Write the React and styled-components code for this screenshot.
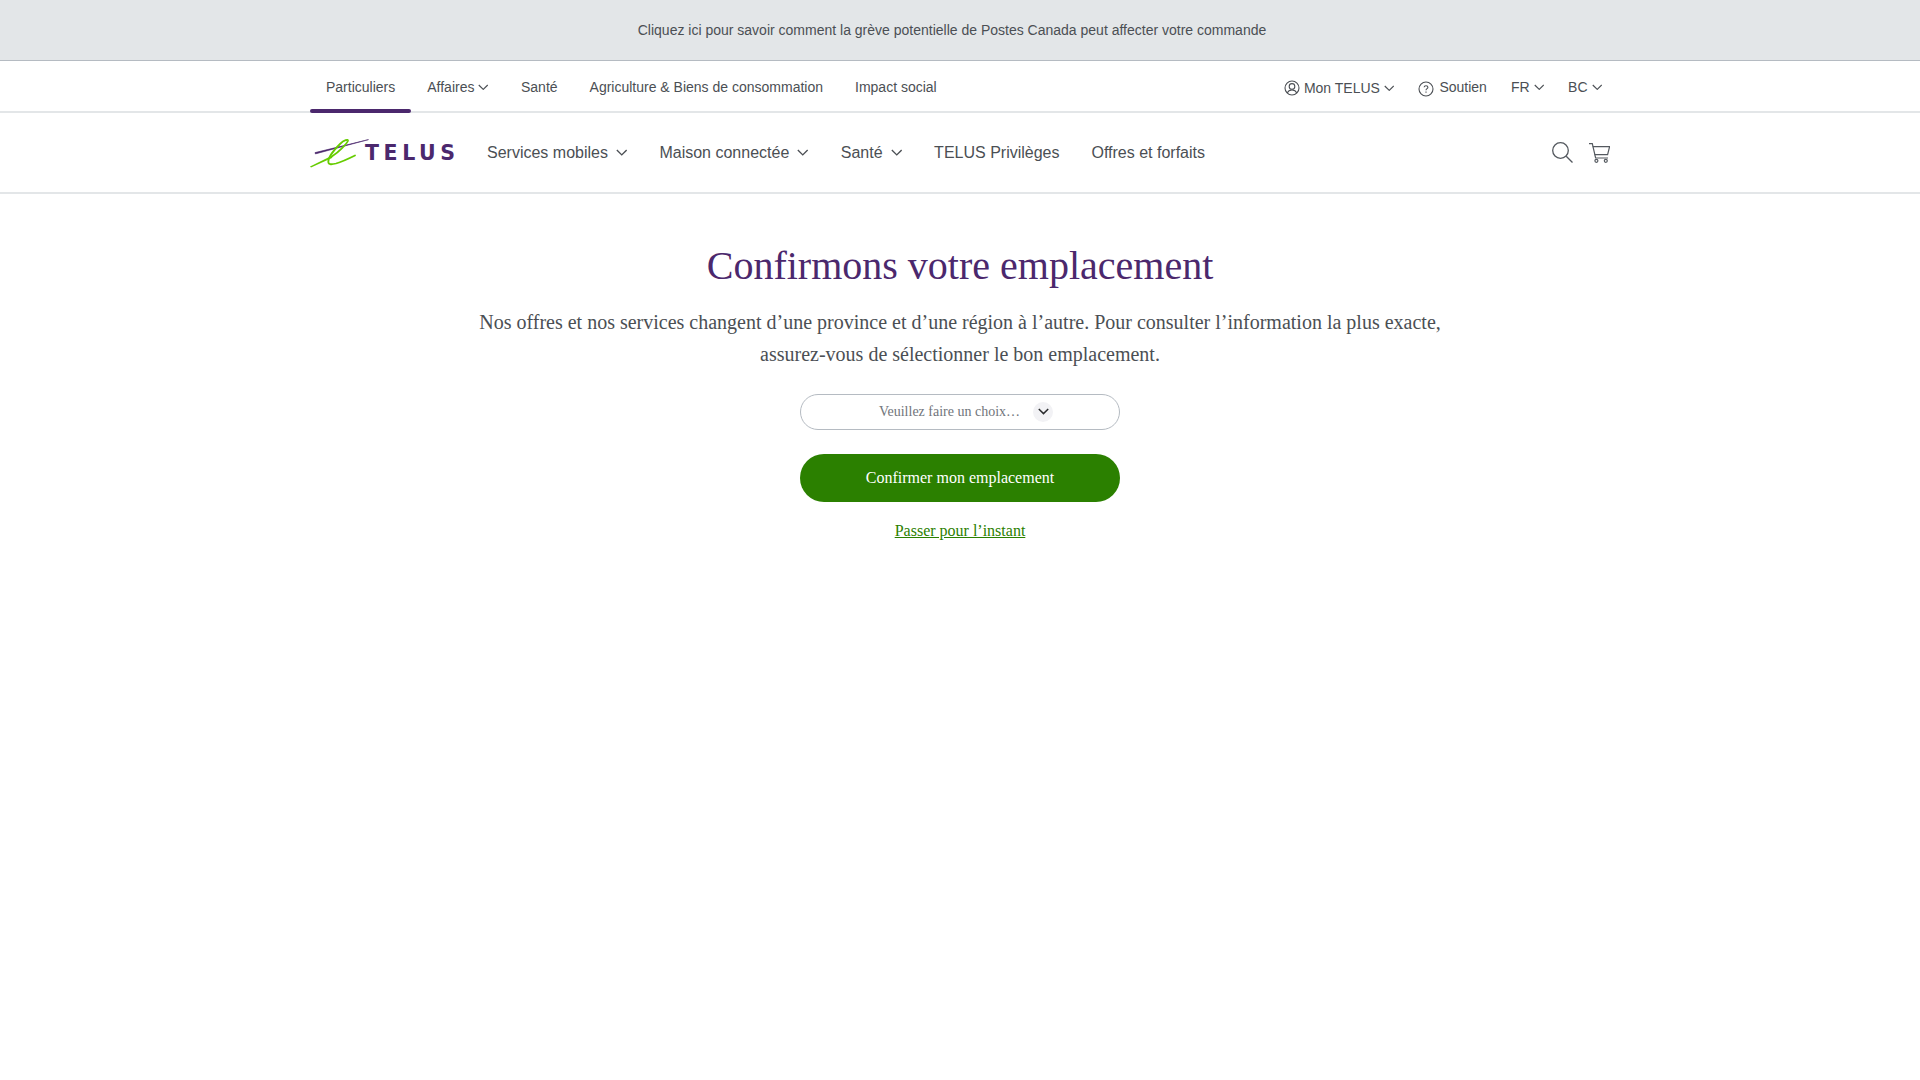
import React from "react";
import styled, { createGlobalStyle } from "styled-components";

const textColor = "#4b4f54";

const GlobalStyle = createGlobalStyle`
  html, body {
    margin: 0;
    padding: 0;
    background: #fff;
    font-family: "Liberation Sans", Arial, sans-serif;
  }
`;

const Banner = styled.a`
  display: flex;
  justify-content: center;
  align-items: center;
  height: 60px;
  padding-right: 16px;
  background-color: #e3e6e8;
  border-bottom: 1px solid #b5bbc2;
  color: ${textColor};
  font-size: 14px;
`;

const UtilityBar = styled.div`
  height: 50px;
  border-bottom: 2px solid #e3e6e8;
`;

const Wrap = styled.div`
  width: 1300px;
  height: 100%;
  margin: 0 auto;
  display: flex;
  justify-content: space-between;
  align-items: center;
`;

const Group = styled.div`
  display: flex;
  align-items: center;
  height: 100%;
  gap: ${(p) => p.$gap || 0}px;
  padding-right: ${(p) => p.$inset || 0}px;
`;

const UtilityLink = styled.a`
  position: relative;
  display: flex;
  align-items: center;
  gap: 4px;
  height: 100%;
  padding: 2px 16px 0;
  box-sizing: border-box;
  font-size: 14px;
  color: ${textColor};

  ${(p) =>
    p.$active &&
    `&::after {
      content: "";
      position: absolute;
      left: 0;
      right: 0;
      bottom: -2px;
      height: 4px;
      border-radius: 2px;
      background: #4b286d;
    }`}
`;

const AccountLink = styled.a`
  display: flex;
  align-items: center;
  gap: 4px;
  padding-top: ${(p) => p.$drop || 2}px;
  font-size: 14px;
  color: ${textColor};
`;

const MainBar = styled.div`
  height: 79px;
  border-bottom: 2px solid #e3e6e8;
`;

const LogoBox = styled.div`
  position: relative;
  width: 145px;
  height: 30px;
`;

const LogoMark = styled.svg`
  position: absolute;
  left: 0;
  top: 0;
`;

const LogoText = styled.span`
  position: absolute;
  left: 55px;
  top: 1px;
  color: #4b286d;
  font-family: "DejaVu Sans", "Liberation Sans", sans-serif;
  font-weight: 700;
  font-size: 20.5px;
  line-height: 28px;
  letter-spacing: 4.6px;
`;

const MainLink = styled.a`
  display: flex;
  align-items: center;
  gap: 8px;
  font-size: 16px;
  color: ${textColor};
`;

const IconButton = styled.span`
  display: flex;
  color: #54595f;
`;

const HelpGlyph = styled.svg`
  margin-top: 4px;
  margin-right: 1px;
`;

const Main = styled.main`
  display: flex;
  flex-direction: column;
  align-items: center;
  font-family: "Liberation Serif", "Times New Roman", serif;
`;

const Title = styled.h1`
  margin: 48px 0 0;
  font-size: 40px;
  font-weight: 400;
  line-height: 48px;
  color: #4b286d;
`;

const Lead = styled.p`
  margin: 16px 0 0;
  width: 1000px;
  text-align: center;
  font-size: 20px;
  line-height: 32px;
  color: ${textColor};
`;

const Select = styled.div`
  display: flex;
  justify-content: center;
  align-items: center;
  gap: 13px;
  width: 320px;
  height: 36px;
  margin-top: 24px;
  padding-left: 12px;
  box-sizing: border-box;
  border: 1px solid #b5bbc2;
  border-radius: 18px;
  font-size: 14px;
  color: #71757b;
`;

const SelectArrow = styled.span`
  display: flex;
  justify-content: center;
  align-items: center;
  width: 20px;
  height: 20px;
  border-radius: 50%;
  background: #f2f2f5;
  color: #2a2c2e;
`;

const ConfirmButton = styled.button`
  width: 320px;
  height: 48px;
  margin-top: 24px;
  border: none;
  border-radius: 24px;
  background-color: #2b8000;
  color: #fff;
  font-family: inherit;
  font-size: 16px;
  cursor: pointer;
`;

const SkipLink = styled.a`
  margin-top: 20px;
  font-size: 16px;
  line-height: 18px;
  color: #2b8000;
  text-decoration: underline;
`;

const Chevron = ({ size = 10.5, weight = 1.2 }) => (
  <svg width={size} height={size * 0.64} viewBox="0 0 11 7" fill="none" stroke="currentColor" strokeWidth={weight}>
    <path d="M0.8 1 L5.5 5.6 L10.2 1" />
  </svg>
);

const UserIcon = () => (
  <svg width="16" height="16" viewBox="0 0 16 16" fill="none" stroke={textColor} strokeWidth="1.1">
    <circle cx="8" cy="8" r="7" />
    <circle cx="8" cy="6.4" r="2.8" />
    <path d="M3.2 13 C4.2 10.6 6 10 8 10 C10 10 11.8 10.6 12.8 13" />
  </svg>
);

const HelpIcon = () => (
  <HelpGlyph width="16" height="16" viewBox="0 0 16 16" fill="none" stroke={textColor} strokeWidth="1.1">
    <circle cx="8" cy="8" r="7" />
    <path d="M6.1 6.3 C6.2 5.2 7 4.7 8 4.7 C9.1 4.7 9.9 5.4 9.9 6.3 C9.9 7.6 8 7.6 8 9.2" />
    <path d="M8 10.6 V11.7" />
  </HelpGlyph>
);

const SearchIcon = () => (
  <svg width="21" height="21" viewBox="0 0 21 21" fill="none" stroke="currentColor" strokeWidth="1.3">
    <circle cx="8.5" cy="8.5" r="7.8" />
    <path d="M14.2 14.2 L20.5 20.5" />
  </svg>
);

const CartIcon = () => (
  <svg width="21" height="20" viewBox="0 0 21 20" fill="none" stroke="currentColor" strokeWidth="1.2">
    <path d="M0 0.7 H3.3 L6.6 15 H19" />
    <path d="M3.7 3.6 H20.6 L18.6 11.7 H5.5" />
    <circle cx="7.4" cy="17.8" r="1.5" />
    <circle cx="16.8" cy="17.8" r="1.5" />
  </svg>
);

const TelusLogo = () => (
  <LogoBox>
    <LogoMark width="60" height="30" viewBox="0 0 60 30" fill="none">
      <path d="M5 14.6 L58.5 1.6 L5.4 15.9 Z" fill="#4b286d" stroke="#4b286d" strokeWidth="0.6" />
      <path d="M0 28.4 L23.3 17 L22 20 L1 29.6 Z" fill="#66cc00" />
      <path
        d="M22.5 18 C29 14 37 5.5 38 2.8 C38.4 0.8 34 2 30 6 C24 12 18 20 18.3 24 C18.5 27 22 26.5 26 25.5 C33 23.5 40 20 45 17.5"
        stroke="#66cc00"
        strokeWidth="1.8"
        strokeLinecap="round"
      />
    </LogoMark>
    <LogoText>TELUS</LogoText>
  </LogoBox>
);

const App = () => {
  return (
    <>
      <GlobalStyle />
      <Banner>Cliquez ici pour savoir comment la grève potentielle de Postes Canada peut affecter votre commande</Banner>

      <UtilityBar>
        <Wrap>
          <Group>
            <UtilityLink $active>Particuliers</UtilityLink>
            <UtilityLink>
              Affaires <Chevron />
            </UtilityLink>
            <UtilityLink>Santé</UtilityLink>
            <UtilityLink>Agriculture &amp; Biens de consommation</UtilityLink>
            <UtilityLink>Impact social</UtilityLink>
          </Group>
          <Group $gap={24} $inset={8}>
            <AccountLink $drop={4}>
              <UserIcon />
              <span>Mon TELUS</span>
              <Chevron />
            </AccountLink>
            <AccountLink>
              <HelpIcon />
              <span>Soutien</span>
            </AccountLink>
            <AccountLink>
              FR <Chevron />
            </AccountLink>
            <AccountLink>
              BC <Chevron />
            </AccountLink>
          </Group>
        </Wrap>
      </UtilityBar>

      <MainBar>
        <Wrap>
          <Group $gap={32}>
            <TelusLogo />
            <MainLink>
              Services mobiles <Chevron size={11.5} weight={1.3} />
            </MainLink>
            <MainLink>
              Maison connectée <Chevron size={11.5} weight={1.3} />
            </MainLink>
            <MainLink>
              Santé <Chevron size={11.5} weight={1.3} />
            </MainLink>
            <MainLink>TELUS Privilèges</MainLink>
            <MainLink>Offres et forfaits</MainLink>
          </Group>
          <Group $gap={16}>
            <IconButton>
              <SearchIcon />
            </IconButton>
            <IconButton>
              <CartIcon />
            </IconButton>
          </Group>
        </Wrap>
      </MainBar>

      <Main>
        <Title>Confirmons votre emplacement</Title>
        <Lead>
          Nos offres et nos services changent d’une province et d’une région à l’autre. Pour consulter l’information la
          plus exacte,
          <br />
          assurez-vous de sélectionner le bon emplacement.
        </Lead>
        <Select>
          Veuillez faire un choix…
          <SelectArrow>
            <Chevron size={11} weight={1.5} />
          </SelectArrow>
        </Select>
        <ConfirmButton>Confirmer mon emplacement</ConfirmButton>
        <SkipLink>Passer pour l’instant</SkipLink>
      </Main>
    </>
  );
};

export default App;
